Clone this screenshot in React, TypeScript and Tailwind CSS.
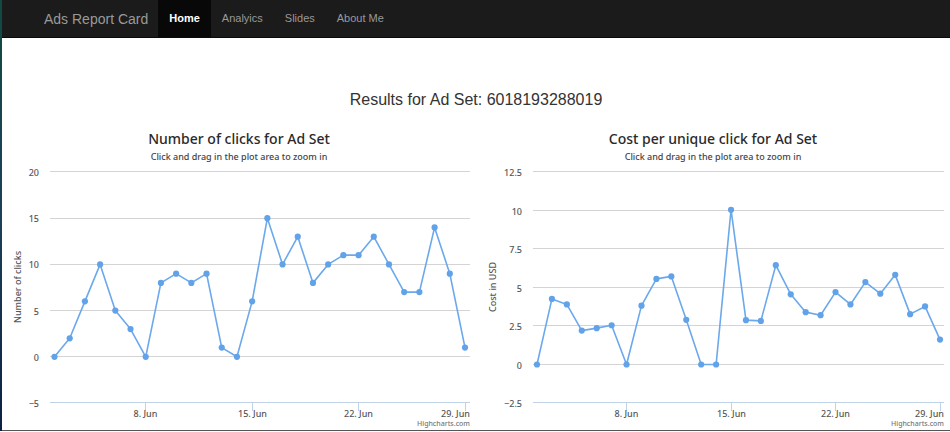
const navLinks = ["Home", "Analyics", "Slides", "About Me"];

type ChartProps = {
  title: string;
  axisTitle: string;
  axisTitleX: number;
  labelX: number;
  plotLeft: number;
  plotRight: number;
  firstX: number;
  lastX: number;
  min: number;
  max: number;
  step: number;
  values: number[];
};

const HEIGHT = 265;
const WIDTH = 474;
const TOP = 7;
const BOTTOM = 238;

const dateTicks = [
  { index: 6, label: "8. Jun" },
  { index: 13, label: "15. Jun" },
  { index: 20, label: "22. Jun" },
  { index: 27, label: "29. Jun" },
];

function Chart(props: ChartProps) {
  const { title, axisTitle, axisTitleX, labelX, plotLeft, plotRight, firstX, lastX, min, max, step, values } = props;
  const x = (i: number) => firstX + ((lastX - firstX) * i) / (values.length - 1);
  const y = (v: number) => BOTTOM - ((v - min) / (max - min)) * (BOTTOM - TOP);
  const ticks = Array.from({ length: Math.round((max - min) / step) + 1 }, (_, i) => min + i * step);

  return (
    <section className="min-w-0 font-['Noto_Sans',sans-serif]">
      <h2 className="text-center text-sm leading-5 font-medium text-[#2a2a2a]">{title}</h2>
      <p className="text-center text-[9px] leading-4 font-medium text-[#444444]">
        Click and drag in the plot area to zoom in
      </p>
      <svg viewBox={`0 0 ${WIDTH} ${HEIGHT}`} className="block h-auto w-full" role="img" aria-label={title}>
        {ticks.map((t) => {
          const lineY = Math.ceil(y(t)) - 0.5;
          return (
            <g key={t}>
              <line x1={plotLeft} x2={plotRight} y1={lineY} y2={lineY} stroke={t === min ? "#c0d3e6" : "#d4d4d4"} />
              <text x={labelX} y={y(t) + 4} textAnchor="end" className="fill-[#555555] text-[9px] font-medium">
                {String(t).replace("-", "−")}
              </text>
            </g>
          );
        })}
        {dateTicks.map(({ index, label }) => {
          const last = index === values.length - 1;
          const tx = Math.floor(x(index)) + 0.5;
          return (
            <g key={label}>
              <line x1={tx} x2={tx} y1={BOTTOM} y2={BOTTOM + 8} stroke="#c0d3e6" />
              <text
                x={last ? plotRight : tx}
                y={BOTTOM + 14}
                textAnchor={last ? "end" : "middle"}
                className="fill-[#555555] text-[9px] font-medium"
              >
                {label}
              </text>
            </g>
          );
        })}
        <text
          transform={`translate(${axisTitleX} 122) rotate(-90)`}
          textAnchor="middle"
          className="fill-[#555555] text-[9px] font-medium"
        >
          {axisTitle}
        </text>
        <polyline
          points={values.map((v, i) => `${x(i)},${y(v)}`).join(" ")}
          fill="none"
          stroke="#6ba8ec"
          strokeWidth="1.6"
          strokeLinejoin="round"
        />
        {values.map((v, i) => (
          <circle key={i} cx={x(i)} cy={y(v)} r="3.1" fill="#62a2e9" />
        ))}
        <a href="#highcharts">
          <text x={plotRight} y="261" textAnchor="end" className="fill-[#777777] text-[7px] font-medium">
            Highcharts.com
          </text>
        </a>
      </svg>
    </section>
  );
}

export default function App() {
  return (
    <div className="flex bg-white font-['Liberation_Sans',Arial,sans-serif]">
      <div className="w-0.5 shrink-0 bg-linear-to-b from-[#0f4a42] via-[#1d4058] to-[#0d2040]" />
      <div className="min-w-0 flex-1 border-b border-[#555555]">
        <nav className="flex h-[38px] items-stretch border-b border-[#0a0a0a] bg-[#1b1b1b] pl-[30px]">
          <a href="#top" className="flex items-center pr-2.5 pl-3 text-sm text-[#999999]">
            Ads Report Card
          </a>
          {navLinks.map((label) => (
            <a
              key={label}
              href={`#${label}`}
              className={`flex items-center px-[11px] text-[11px] ${
                label === "Home" ? "bg-[#080808] font-bold text-white" : "text-[#999999]"
              }`}
            >
              {label}
            </a>
          ))}
        </nav>
        <main>
          <h1 className="mt-[50px] mb-[17px] text-center text-base leading-6 text-[#333333]">
            Results for Ad Set: 6018193288019
          </h1>
          <div className="grid grid-cols-2">
            <Chart
              title="Number of clicks for Ad Set"
              axisTitle="Number of clicks"
              axisTitleX={19}
              labelX={37}
              plotLeft={48}
              plotRight={468}
              firstX={52.5}
              lastX={463}
              min={-5}
              max={20}
              step={5}
              values={[0, 2, 6, 10, 5, 3, 0, 8, 9, 8, 9, 1, 0, 6, 15, 10, 13, 8, 10, 11, 11, 13, 10, 7, 7, 14, 9, 1]}
            />
            <Chart
              title="Cost per unique click for Ad Set"
              axisTitle="Cost in USD"
              axisTitleX={20}
              labelX={46}
              plotLeft={57}
              plotRight={468}
              firstX={61}
              lastX={464}
              min={-2.5}
              max={12.5}
              step={2.5}
              values={[
                0, 4.26, 3.9, 2.2, 2.36, 2.55, 0, 3.82, 5.56, 5.72, 2.9, 0, 0, 10.05, 2.88, 2.83, 6.45, 4.56, 3.4, 3.2,
                4.7, 3.9, 5.35, 4.6, 5.82, 3.27, 3.77, 1.62,
              ]}
            />
          </div>
        </main>
      </div>
    </div>
  );
}
